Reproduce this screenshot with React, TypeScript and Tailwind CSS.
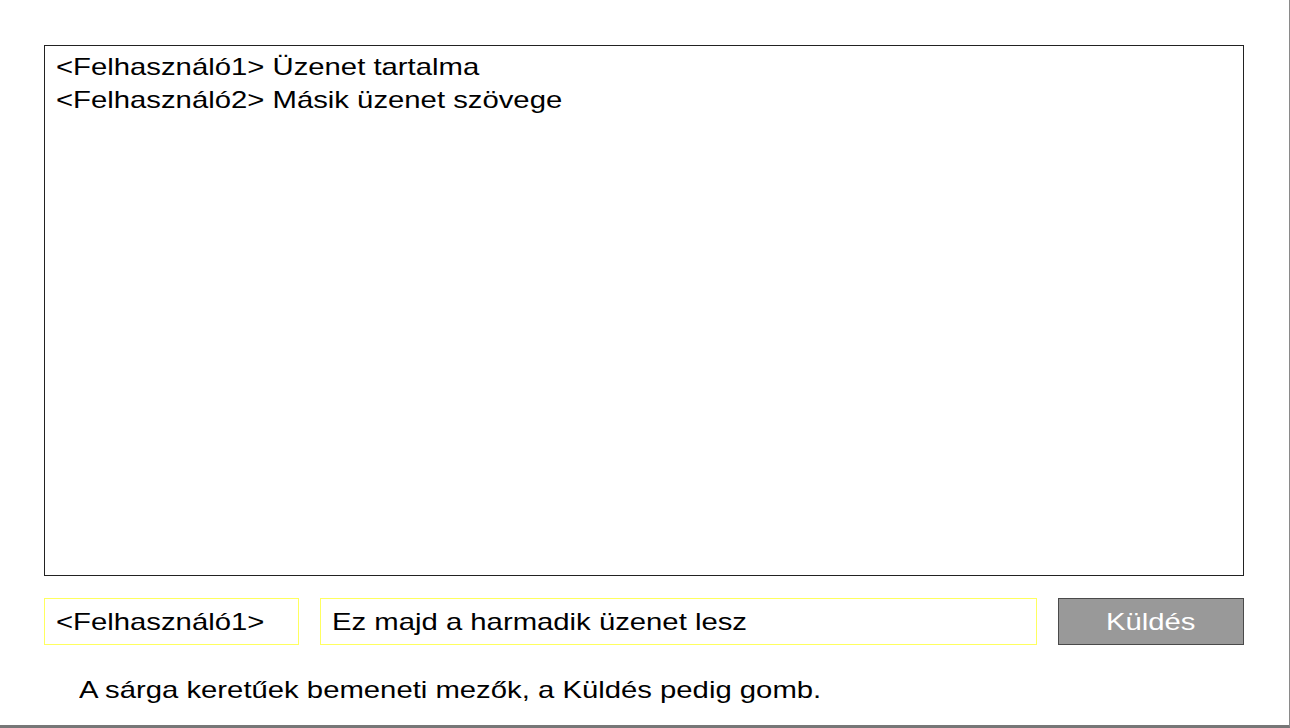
export default function App() {
  const messages = [
    { user: "<Felhasználó1>", text: "Üzenet tartalma" },
    { user: "<Felhasználó2>", text: "Másik üzenet szövege" },
  ];

  // the source drawing is stretched horizontally, so text gets a scale-x
  const wide = "inline-block whitespace-nowrap origin-left scale-x-[1.22]";

  return (
    <div className="w-[1290px] h-[728px] bg-white border-r border-r-[#8a8a8a] border-b-[3px] border-b-[#777] font-['Liberation_Sans',Arial,sans-serif] text-black overflow-hidden">
      <div className="pl-[44px] pt-[45px] w-[1244px]">
        {/* message log */}
        <div className="h-[531px] border border-[#222] px-[11px] pt-[4px] text-[24px] leading-[33px]">
          {messages.map((m, i) => (
            <div key={i}>
              <span className={wide}>
                {m.user} {m.text}
              </span>
            </div>
          ))}
        </div>

        {/* input row */}
        <div className="flex gap-[21px] mt-[22px] h-[47px] text-[24px]">
          <div className="w-[255px] border border-[#ffff60] px-[11px] flex items-center">
            <span className={wide}>&lt;Felhasználó1&gt;</span>
          </div>
          <div className="w-[717px] border border-[#ffff60] px-[11px] flex items-center">
            <span className={wide}>Ez majd a harmadik üzenet lesz</span>
          </div>
          <button className="flex-1 bg-[#999] border border-[#4a4a4a] text-white flex items-center justify-center">
            <span className="inline-block scale-x-[1.22]">Küldés</span>
          </button>
        </div>

        <p className="mt-[28px] pl-[35px] text-[24px] leading-[33px]">
          <span className={wide}>A sárga keretűek bemeneti mezők, a Küldés pedig gomb.</span>
        </p>
      </div>
    </div>
  );
}
